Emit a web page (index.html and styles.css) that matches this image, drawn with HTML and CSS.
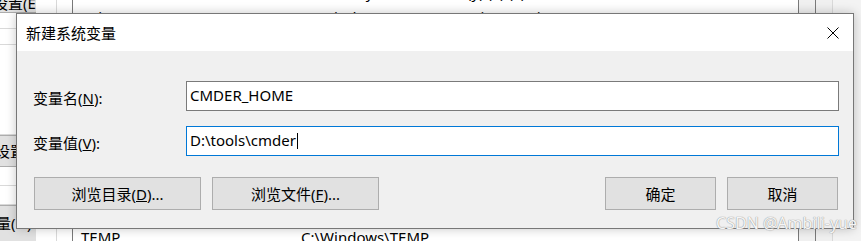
FILE: index.html
```html
<!DOCTYPE html>
<html lang="zh-CN">
<head>
  <meta charset="UTF-8">
  <meta name="viewport" content="width=device-width, initial-scale=1.0">
  <title>新建系统变量</title>
  <link rel="stylesheet" href="styles.css">
</head>
<body>
  <div class="desk">
    <div class="side">
      <div class="side-btn side-btn-top">设置(E)</div>
      <div class="side-row"></div>
      <div class="side-row"></div>
      <div class="side-row tall"></div>
      <div class="side-btn">设置(T)</div>
      <div class="side-row mid"></div>
      <div class="side-row mid"></div>
      <div class="side-btn shift">变量(N)</div>
    </div>
    <div class="gutter"></div>
    <div class="list">
      <div class="list-row first"><span class="name">OneDrive</span><span class="value">C:\Users\yue\OneDrive (y) (x) (x)</span></div>
      <div class="list-row"><span class="name">DriverData</span><span class="value">C:\Windows\System32\Drivers\DriverData</span></div>
      <div class="list-spacer"></div>
      <div class="list-row last"><span class="name">TEMP</span><span class="value">C:\Windows\TEMP</span></div>
    </div>
    <div class="scroll"></div>
    <div class="scroll"></div>
    <div class="edge"></div>

    <div class="dialog">
      <div class="titlebar">
        <span class="title">新建系统变量</span>
        <svg class="close" width="12" height="12" viewBox="0 0 12 12">
          <path d="M0.5 0.5 L11.5 11.5 M11.5 0.5 L0.5 11.5" stroke="#000" stroke-width="1" fill="none"/>
        </svg>
      </div>
      <div class="content">
        <div class="field">
          <label class="label">变量名(<u>N</u>):</label>
          <div class="input">CMDER_HOME</div>
        </div>
        <div class="field">
          <label class="label">变量值(<u>V</u>):</label>
          <div class="input focused">D:\tools\cmder<span class="caret"></span></div>
        </div>
        <div class="actions">
          <button class="btn wide">浏览目录(<u>D</u>)...</button>
          <button class="btn wide">浏览文件(<u>F</u>)...</button>
          <span class="spacer"></span>
          <button class="btn">确定</button>
          <button class="btn">取消</button>
        </div>
      </div>
    </div>

    <div class="watermark">CSDN @Ambili-yue</div>
  </div>
</body>
</html>
```

FILE: styles.css
```css
body {
  margin: 0;
  font-family: "Noto Sans", "Noto Sans CJK SC", sans-serif;
  font-size: 15px;
  color: #000;
  background: #f0f0f0;
}
.desk {
  position: relative;
  width: 861px;
  height: 241px;
  overflow: hidden;
  display: flex;
  background: #f0f0f0;
}

/* window behind the dialog */
.side {
  width: 36px;
  display: flex;
  flex-direction: column;
  background: #fff;
  overflow: hidden;
}
.side-btn {
  flex: none;
  height: 32px;
  box-sizing: border-box;
  background: #e1e1e1;
  border-top: 1px solid #adadad;
  border-bottom: 1px solid #adadad;
  line-height: 30px;
  white-space: nowrap;
  text-indent: -5px;
}
.side-btn-top {
  height: 24px;
  margin-top: -11px;
  padding-top: 6px;
  line-height: 16px;
  border-top: none;
  text-indent: -7px;
}
.side-btn.shift {
  height: 40px;
  text-indent: -19px;
  line-height: 34px;
}
.side-row {
  flex: none;
  height: 15px;
  border-bottom: 1px solid #d9d9d9;
}
.side-row.tall {
  height: 89px;
}
.side-row.mid {
  height: 18px;
}
.gutter {
  width: 36px;
  border-right: 1px solid #7a7a7a;
  background: linear-gradient(90deg, #fff 0, #fff 20px, #d9d9d9 20px, #d9d9d9 21px, #fff 21px);
}
.list {
  flex: 1;
  display: flex;
  flex-direction: column;
  background: #fff;
}
.list-row {
  flex: none;
  display: flex;
  height: 22px;
  line-height: 22px;
  white-space: nowrap;
}
.list-row.first {
  margin-top: -19px;
  margin-bottom: 3px;
}
.list-row.last {
  margin-bottom: -7px;
}
.list-spacer {
  flex: 1;
}
.name {
  width: 220px;
  padding-left: 8px;
}
.scroll {
  width: 16px;
  border-left: 1px solid #7a7a7a;
  background: #f0f0f0;
}
.edge {
  width: 28px;
  border-left: 1px solid #d9d9d9;
  background: #f3f3f3;
}

/* dialog */
.dialog {
  position: absolute;
  left: 16px;
  top: 13px;
  width: 838px;
  height: 216px;
  box-sizing: border-box;
  border: 1px solid #777;
  background: #f0f0f0;
  box-shadow: 0 0 10px rgba(0, 0, 0, 0.22);
  display: flex;
  flex-direction: column;
}
.titlebar {
  height: 37px;
  background: #fff;
  display: flex;
  align-items: center;
  padding: 0 14px 0 9px;
}
.title {
  flex: 1;
}
.close {
  display: block;
}
.content {
  padding: 30px 14px 0 16px;
  display: flex;
  flex-direction: column;
  gap: 15px;
}
.field {
  display: flex;
  align-items: center;
  height: 30px;
}
.label {
  width: 153px;
  padding-top: 2px;
}
.input {
  flex: 1;
  height: 30px;
  box-sizing: border-box;
  border: 1px solid #7a7a7a;
  background: #fff;
  padding-left: 3px;
  line-height: 27px;
  white-space: nowrap;
}
.input.focused {
  border-color: #0078d7;
}
.caret {
  display: inline-block;
  width: 1px;
  height: 16px;
  margin-left: 1px;
  background: #000;
  vertical-align: -3px;
}
.actions {
  display: flex;
  gap: 11px;
  margin-top: 6px;
  padding: 0 1px 0 1px;
}
.spacer {
  flex: 1;
}
.btn {
  width: 111px;
  height: 33px;
  box-sizing: border-box;
  border: 1px solid #adadad;
  background: #e1e1e1;
  font: inherit;
  color: #000;
  padding: 0;
}
.btn.wide {
  width: 167px;
}

.watermark {
  position: absolute;
  right: 4px;
  bottom: 7px;
  font-family: "Noto Sans", sans-serif;
  font-size: 16px;
  color: rgba(255, 255, 255, 0.92);
  text-shadow: 0 0 1px #999, 0 0 1px #999;
  white-space: nowrap;
}
```
